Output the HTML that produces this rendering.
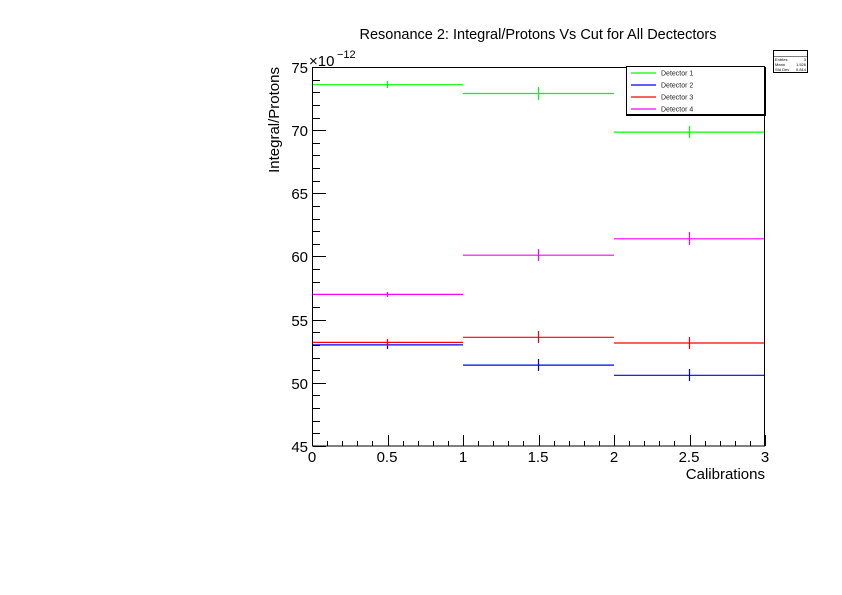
<!DOCTYPE html>
<html><head><meta charset="utf-8"><style>
html,body{margin:0;padding:0;background:#fff;width:842px;height:595px;overflow:hidden}
svg{display:block;font-family:"Liberation Sans",sans-serif}
</style></head><body>
<svg id="s" width="842" height="595" viewBox="0 0 842 595" xmlns="http://www.w3.org/2000/svg">
<rect width="842" height="595" fill="#fff"/>
<text x="538" y="39" font-size="14.5" text-anchor="middle">Resonance 2: Integral/Protons Vs Cut for All Dectectors</text>
<rect x="312.5" y="67.5" width="452" height="378.5" fill="none" stroke="#000" stroke-width="1"/>
<g id="ticks" stroke="#000" stroke-width="1"></g>
<g font-size="15" text-anchor="end">
<text x="308" y="73">75</text><text x="308" y="136">70</text><text x="308" y="199">65</text>
<text x="308" y="262">60</text><text x="308" y="326">55</text><text x="308" y="389">50</text>
<text x="308" y="452">45</text>
</g>
<text x="309" y="66" font-size="15">×10</text><text x="337" y="58" font-size="11">−12</text>
<g font-size="15" text-anchor="middle">
<text x="312" y="462">0</text><text x="387" y="462">0.5</text><text x="463" y="462">1</text>
<text x="538" y="462">1.5</text><text x="614" y="462">2</text><text x="689" y="462">2.5</text><text x="765" y="462">3</text>
</g>
<text x="765" y="479" font-size="15" text-anchor="end">Calibrations</text>
<text transform="translate(279,67) rotate(-90)" font-size="15" text-anchor="end">Integral/Protons</text>
<g stroke-width="1.2" fill="none">
<g stroke="#00ff00"><path d="M313 84.7H463M463 93.5H614M614 132.1H764M387.5 81V88M538.5 87V100M689.5 126V138"/></g>
<g stroke="#0000ff"><path d="M313 344.9H463M463 365.1H614M614 375.3H764M387.5 341V349M538.5 359V371M689.5 369V381"/></g>
<g stroke="#ff0000"><path d="M313 342.4H463M463 337.3H614M614 343H764M387.5 339V346M538.5 331V343M689.5 337V349"/></g>
<g stroke="#ff00ff"><path d="M313 294.4H463M463 255.2H614M614 238.8H764M387.5 292V297M538.5 249V261M689.5 232V245"/></g>
</g>
<rect x="626.5" y="66.5" width="138" height="48" fill="#fff" stroke="#000"/>
<line x1="626" y1="115.5" x2="766" y2="115.5" stroke="#000" stroke-width="1"/>
<line x1="765.5" y1="67" x2="765.5" y2="116" stroke="#000" stroke-width="1"/>
<g font-size="7" fill="#222">
<line x1="631" y1="73" x2="656" y2="73" stroke="#00ff00" stroke-width="1.2"/><text x="661" y="75.5">Detector 1</text>
<line x1="631" y1="85" x2="656" y2="85" stroke="#0000ff" stroke-width="1.2"/><text x="661" y="87.5">Detector 2</text>
<line x1="631" y1="97" x2="656" y2="97" stroke="#ff0000" stroke-width="1.2"/><text x="661" y="99.5">Detector 3</text>
<line x1="631" y1="109" x2="656" y2="109" stroke="#ff00ff" stroke-width="1.2"/><text x="661" y="111.5">Detector 4</text>
</g>
<rect x="773.5" y="50.5" width="34" height="22" fill="#fff" stroke="#000"/>
<line x1="774" y1="56.5" x2="807" y2="56.5" stroke="#000" stroke-width="0.6"/>
<g font-size="4" fill="#000">
<text x="775" y="61">Entries</text><text x="806" y="61" text-anchor="end">3</text>
<text x="775" y="66">Mean</text><text x="806" y="66" text-anchor="end">1.526</text>
<text x="775" y="71">Std Dev</text><text x="806" y="71" text-anchor="end">0.814</text>
</g>
</svg>
<script>
var g=document.getElementById('ticks'),d='';
for(var v=45;v<=75;v++){var y=67+(75-v)*12.633;y=Math.round(y)+0.5;var L=(v%5==0)?13:7;d+='M313 '+y+'H'+(313+L);}
for(var i=0;i<=30;i++){var x=Math.round(312+i*15.1)+0.5;var L=(i%5==0)?11:5;d+='M'+x+' 446V'+(446-L);}
var p=document.createElementNS('http://www.w3.org/2000/svg','path');p.setAttribute('d',d);g.appendChild(p);
</script>
</body></html>
